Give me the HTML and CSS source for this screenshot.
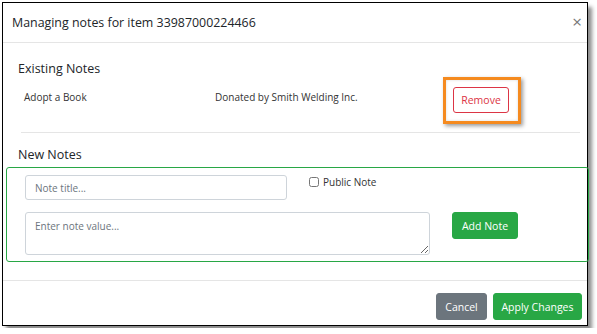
FILE: index.html
```html
<!DOCTYPE html>
<html lang="en">
<head>
    <meta charset="UTF-8">
    <title>Managing notes</title>
    <link rel="stylesheet" href="styles.css">
</head>
<body>
    <div class="modal">
        <div class="modal-header">
            <h4 class="modal-title">Managing notes for item 33987000224466</h4>
            <span class="close">&times;</span>
        </div>
        <div class="modal-body">
            <h5 class="section-title">Existing Notes</h5>
            <div class="note-row">
                <span class="note-title">Adopt a Book</span>
                <span class="note-value">Donated by Smith Welding Inc.</span>
                <span class="note-action">
                    <button class="btn btn-outline-danger">Remove</button>
                    <span class="highlight"></span>
                </span>
            </div>
            <hr class="divider">
            <h5 class="section-title new">New Notes</h5>
            <div class="new-note">
                <div class="new-row">
                    <input class="field title-field" type="text" placeholder="Note title...">
                    <label class="public"><input type="checkbox"> Public Note</label>
                </div>
                <div class="new-row second">
                    <textarea class="field value-field" placeholder="Enter note value..."></textarea>
                    <button class="btn btn-success add">Add Note</button>
                </div>
            </div>
        </div>
        <div class="modal-footer">
            <button class="btn btn-secondary">Cancel</button>
            <button class="btn btn-success">Apply Changes</button>
        </div>
    </div>
</body>
</html>
```

FILE: styles.css
```css
body {
    margin: 0;
    background-color: #ffffff;
    font-family: 'Open Sans', 'Noto Sans', sans-serif;
    color: #333333;
}
.modal {
    margin: 2px;
    width: 586px;
    height: 324px;
    box-sizing: border-box;
    border: 1px solid #000000;
    background-color: #ffffff;
    box-shadow: 4px 5px 4px rgba(0, 0, 0, 0.45);
    display: flex;
    flex-direction: column;
}
.modal-header {
    height: 39px;
    border-bottom: 1px solid #e5e5e5;
    display: flex;
    align-items: center;
    justify-content: space-between;
    padding: 0 5px 0 9px;
}
.modal-title {
    margin: 0;
    font-size: 12.4px;
    font-weight: normal;
    color: #212529;
}
.close {
    font-size: 17px;
    color: #777777;
    line-height: 1;
    margin-top: -3px;
}
.modal-body {
    flex: 1;
    padding: 17px 7px 0 15px;
    border-bottom: 1px solid #e5e5e5;
}
.section-title {
    margin: 0;
    font-size: 12.5px;
    font-weight: normal;
    line-height: 18px;
    color: #212529;
}
.note-row {
    display: grid;
    grid-template-columns: 191px 238px 1fr;
    align-items: start;
    padding: 9px 0 0 6px;
    font-size: 10px;
    line-height: 15px;
    color: #333333;
}
.note-title,
.note-value {
    padding-top: 3px;
}
.note-action {
    position: relative;
    width: 56px;
    height: 26px;
}
.highlight {
    position: absolute;
    left: -10px;
    top: -10px;
    width: 72px;
    height: 41px;
    border: 3px solid #f58a1f;
    box-shadow: 2px 2px 4px rgba(0, 0, 0, 0.4), inset 0 0 3px rgba(0, 0, 0, 0.15);
}
.btn {
    font-family: inherit;
    font-size: 10.5px;
    border-radius: 3px;
    border: 1px solid transparent;
    cursor: pointer;
    height: 26px;
    padding: 0 10px;
    box-sizing: border-box;
}
.btn-outline-danger {
    width: 56px;
    padding: 0;
    background-color: #ffffff;
    border-color: #dc3545;
    color: #dc3545;
}
.btn-success {
    background-color: #28a745;
    border-color: #28a745;
    color: #ffffff;
}
.btn-secondary {
    background-color: #6c757d;
    border-color: #6c757d;
    color: #ffffff;
}
.divider {
    margin: 19px 0 0 3px;
    border: 0;
    border-top: 1px solid #e5e5e5;
}
.section-title.new {
    margin-top: 13px;
}
.new-note {
    margin: 3px -9px 0 -12px;
    height: 95px;
    box-sizing: border-box;
    border: 1px solid #28a745;
    border-radius: 3px;
    padding: 7px 0 0 18px;
}
.new-row {
    display: flex;
    align-items: flex-start;
}
.new-row.second {
    margin-top: 12px;
}
.field {
    font-family: inherit;
    font-size: 10px;
    border: 1px solid #ced4da;
    border-radius: 3px;
    box-sizing: border-box;
    padding: 0 9px;
    color: #495057;
}
.field::placeholder {
    color: #6c757d;
}
.title-field {
    width: 262px;
    height: 25px;
}
.value-field {
    width: 405px;
    height: 43px;
    padding-top: 6px;
    resize: vertical;
}
.public {
    display: flex;
    align-items: center;
    gap: 4px;
    margin: 0 0 0 22px;
    font-size: 10px;
    color: #333333;
}
.public input {
    margin: 0;
    width: 10px;
    height: 10px;
}
.add {
    margin-left: 22px;
    height: 27px;
    width: 66px;
    padding: 0;
    font-size: 10.5px;
}
.modal-footer {
    height: 44px;
    display: flex;
    justify-content: flex-end;
    align-items: flex-start;
    gap: 6px;
    padding: 12px 5px 0 0;
    box-sizing: border-box;
}
.modal-footer .btn {
    height: 27px;
    font-size: 10.5px;
}
.modal-footer .btn-secondary {
    width: 51px;
    padding: 0;
}
.modal-footer .btn-success {
    width: 89px;
    padding: 0;
}
```
